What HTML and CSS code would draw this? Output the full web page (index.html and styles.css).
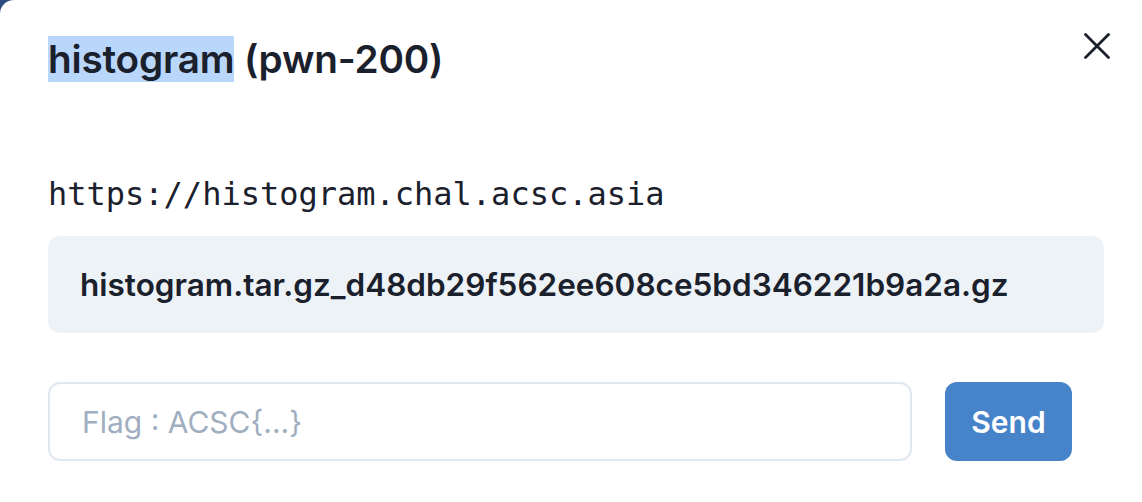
FILE: index.html
```html
<!DOCTYPE html>
<html lang="en">
<head>
<meta charset="utf-8">
<title>histogram (pwn-200)</title>
<link rel="stylesheet" href="styles.css">
</head>
<body>
<div class="modal">
  <header class="modal-header">
    <h2 class="title"><span class="selected">histogram</span> (pwn-200)</h2>
    <button class="close" aria-label="Close">
      <svg viewBox="0 0 26 26" width="26" height="26"><path d="M1.5 1.5 L24.5 24.5 M24.5 1.5 L1.5 24.5" stroke="#1a202c" stroke-width="2.8" stroke-linecap="round" fill="none"/></svg>
    </button>
  </header>
  <div class="modal-body">
    <p class="url">https://histogram.chal.acsc.asia</p>
    <a class="file" href="#">histogram.tar.gz_d48db29f562ee608ce5bd346221b9a2a.gz</a>
    <form class="flag-row">
      <input class="flag-input" type="text" placeholder="Flag : ACSC{...}">
      <button class="send" type="button">Send</button>
    </form>
  </div>
</div>
</body>
</html>
```
FILE: styles.css
```css
html, body {
  margin: 0;
  height: 100%;
}
body {
  background: #2c4a7e;
  font-family: Inter, "Noto Sans", sans-serif;
  color: #1a202c;
}
.modal {
  box-sizing: border-box;
  min-height: 100vh;
  background: #ffffff;
  border-top-left-radius: 14px;
  padding: 36px 38px 0 48px;
}
.modal-header {
  display: flex;
  justify-content: space-between;
  align-items: flex-start;
}
.title {
  margin: 0;
  font-size: 38.7px;
  line-height: 46px;
  font-weight: 600;
  letter-spacing: -0.2px;
}
.selected {
  background: #b9d6fb;
}
.close {
  width: 40px;
  height: 40px;
  margin: -10px -13px 0 0;
  padding: 0;
  border: 0;
  background: transparent;
  display: flex;
  align-items: center;
  justify-content: center;
}
.modal-body {
  padding-top: 88px;
}
.url {
  margin: 0;
  font-family: "DejaVu Sans Mono", monospace;
  font-size: 32px;
  line-height: 48px;
  color: #1a202c;
}
.file {
  display: flex;
  align-items: center;
  box-sizing: border-box;
  height: 97px;
  margin-top: 18px;
  padding: 0 32px;
  background: #edf2f7;
  border-radius: 12px;
  color: #1a202c;
  text-decoration: none;
  font-weight: 600;
  font-size: 31.5px;
}
.flag-row {
  display: flex;
  gap: 33px;
  margin: 49px 32px 0 0;
}
.flag-input {
  box-sizing: border-box;
  width: 864px;
  height: 79px;
  border: 2px solid #e2e8f0;
  border-radius: 12px;
  padding: 0 32px;
  font-family: Inter, "Noto Sans", sans-serif;
  font-size: 30px;
  color: #1a202c;
  outline: none;
}
.flag-input::placeholder {
  color: #a0aec0;
}
.send {
  box-sizing: border-box;
  width: 127px;
  height: 79px;
  border: 0;
  border-radius: 12px;
  background: #4783c9;
  color: #ffffff;
  font-family: Inter, "Noto Sans", sans-serif;
  font-weight: 600;
  font-size: 30px;
}
```
